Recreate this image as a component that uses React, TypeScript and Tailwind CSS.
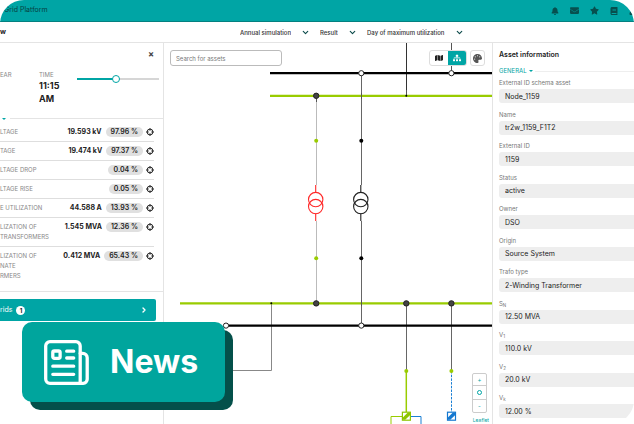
import { useState } from "react"
import type { ReactNode } from "react"
import { ChevronDown, ChevronRight } from "lucide-react"
import { FaBell, FaBook, FaEnvelope, FaMap, FaPalette, FaSitemap, FaStar, FaUser } from "react-icons/fa"

interface Reading {
  label: string[]
  value?: string
  percent: string
}

interface Field {
  id: string
  label: ReactNode
  value: string
}

const readings: Reading[] = [
  { label: ["LTAGE"], value: "19.593 kV", percent: "97.96 %" },
  { label: ["TAGE"], value: "19.474 kV", percent: "97.37 %" },
  { label: ["LTAGE DROP"], percent: "0.04 %" },
  { label: ["LTAGE RISE"], percent: "0.05 %" },
  { label: ["E UTILIZATION"], value: "44.588 A", percent: "13.93 %" },
  { label: ["LIZATION OF", "TRANSFORMERS"], value: "1.545 MVA", percent: "12.36 %" },
  { label: ["LIZATION OF", "NATE", "RMERS"], value: "0.412 MVA", percent: "65.43 %" },
]

const fields: Field[] = [
  { id: "schema", label: "External ID schema asset", value: "Node_1159" },
  { id: "name", label: "Name", value: "tr2w_1159_F1T2" },
  { id: "external", label: "External ID", value: "1159" },
  { id: "status", label: "Status", value: "active" },
  { id: "owner", label: "Owner", value: "DSO" },
  { id: "origin", label: "Origin", value: "Source System" },
  { id: "trafo", label: "Trafo type", value: "2-Winding Transformer" },
  { id: "sn", label: <>S<sub>N</sub></>, value: "12.50 MVA" },
  { id: "v1", label: <>V<sub>1</sub></>, value: "110.0 kV" },
  { id: "v2", label: <>V<sub>2</sub></>, value: "20.0 kV" },
  { id: "vk", label: <>V<sub>k</sub></>, value: "12.00 %" },
]

function Picker({ label, text }: { label: string; text: string }) {
  return (
    <div className="flex items-center gap-[10px]">
      <select aria-label={label} className="appearance-none bg-transparent text-[6px] font-medium text-[#333]">
        <option>{text}</option>
      </select>
      <ChevronDown className="size-[9px] text-[#0b4a4a]" strokeWidth={3} />
    </div>
  )
}

function Target() {
  return (
    <svg viewBox="0 0 16 16" className="size-2" fill="none" stroke="#222" aria-hidden="true">
      <circle cx="8" cy="8" r="5.8" strokeWidth="2" />
      <path d="M8 0v5.5M8 10.5v5.5M0 8h5.5M10.5 8h5.5" strokeWidth="1.8" />
    </svg>
  )
}

function Transformer({ x, color }: { x: number; color: string }) {
  return (
    <g stroke={color} strokeWidth="1.1" fill="none">
      <path d={`M${x} 142v7.5M${x} 170.5v7.5`} />
      <circle cx={x} cy="156.6" r="7.2" />
      <circle cx={x} cy="163.6" r="7.2" />
    </g>
  )
}

function Switch({ x, color }: { x: number; color: string }) {
  return (
    <g>
      <rect x={x - 4} y="369.2" width="8" height="8" fill="#fff" stroke={color} strokeWidth="1.2" />
      <path d={`M${x - 3.6} 376.8v-2.4l5-4.8h2.4v2.4l-5 4.8z`} fill={color} />
    </g>
  )
}

function GridDiagram() {
  return (
    <svg className="absolute inset-0 h-full w-full" role="img" aria-label="Grid schematic">
      {/* Wires */}
      <g fill="none" strokeWidth="1">
        <path d="M242.5 0v53" stroke="#333" />
        <path d="M287.5 0v30" stroke="#555" />
        <path d="M152.5 53v89M152.5 178v82" stroke="#bbb" />
        <path d="M197.5 30v112M197.5 178v104" stroke="#666" />
        <path d="M107.5 260v67.5H16" stroke="#888" />
        <path d="M242.5 260v68M287.5 260v68" stroke="#666" />
      </g>
      {/* Bus bars */}
      <path d="M106 30.2h2000M62 282.6h2000" stroke="#000" strokeWidth="2.2" />
      <path d="M106 52.8h2000M16 260.4h2000" stroke="#99cc00" strokeWidth="2.2" />
      <path d="M152.5 53v6M242.5 47v6" stroke="#555" />
      <path d="M197.5 50v6M197.5 257v6" stroke="#555" />
      {/* Feeders */}
      <path d="M242.3 328v41" stroke="#99cc00" strokeWidth="1.5" />
      <path d="M287.5 328v41" stroke="#1a7fd4" strokeDasharray="2.5 1.2" />
      <path d="M239 373.5H227V400" stroke="#99cc00" fill="none" />
      <path d="M246 373.5H257V400" stroke="#1a7fd4" fill="none" />
      <Switch x={242.4} color="#8ec600" />
      <Switch x={287.5} color="#1478d0" />
      <Transformer x={151.7} color="#ff2a2a" />
      <Transformer x={196.8} color="#222" />
      <g fill="#99cc00">
        <circle cx="152.2" cy="97.8" r="2" />
        <circle cx="152.2" cy="215.2" r="2" />
        <circle cx="242.3" cy="328" r="2" />
        <circle cx="287.4" cy="328" r="2" />
      </g>
      <g fill="#000">
        <circle cx="197.3" cy="97.8" r="2" />
        <circle cx="197.3" cy="215.2" r="2" />
        <circle cx="242.3" cy="52.8" r="1" />
        <circle cx="107.3" cy="260.2" r="1" />
      </g>
      <g fill="#444" stroke="#222">
        <circle cx="152.2" cy="52.8" r="2.7" />
        <circle cx="152.2" cy="260.4" r="2.7" />
        <circle cx="242.3" cy="260.4" r="2.7" />
        <circle cx="287.4" cy="260.4" r="2.7" />
      </g>
      <g fill="#fff" stroke="#222">
        <circle cx="197.3" cy="30.2" r="2.6" />
        <circle cx="287.4" cy="30.2" r="2.6" />
        <circle cx="62" cy="282.6" r="2.6" />
        <circle cx="197.3" cy="282.6" r="2.6" />
      </g>
    </svg>
  )
}

function NewsIcon() {
  return (
    <svg
      viewBox="0 0 45 45"
      className="size-[45px]"
      fill="none"
      stroke="#fff"
      strokeWidth="3.3"
      strokeLinecap="round"
      strokeLinejoin="round"
      aria-hidden="true"
    >
      <path d="M36.2 43.3H6a4.3 4.3 0 0 1-4.3-4.3V6A4.3 4.3 0 0 1 6 1.7h25.9A4.3 4.3 0 0 1 36.2 6z" />
      <path d="M36.2 13.3h2.6a4.4 4.4 0 0 1 4.4 4.4v21.6a4 4 0 0 1-4 4h-3" />
      <rect x="8.8" y="11" width="7.3" height="7.3" rx="1.5" />
      <path d="M22.7 11.2h7M22.7 18h7M8.8 26.2h20.9M8.8 34.3h20.9" />
    </svg>
  )
}

export default function App() {
  const [time, setTime] = useState(47)

  return (
    <div className="relative flex min-h-screen flex-col overflow-hidden rounded-3xl bg-white font-['Inter',sans-serif] text-[7px] text-[#222]">
      {/* Header */}
      <header className="flex h-[22px] items-center justify-between border-b border-[#048080] bg-[#00a5a5] pl-1">
        <span className="text-[#073f3f]">Grid Platform</span>
        <nav aria-label="Account" className="flex items-center gap-[11px] text-[#07504f]">
          <button aria-label="Notifications"><FaBell className="size-2" /></button>
          <button aria-label="Messages"><FaEnvelope className="size-[9px]" /></button>
          <button aria-label="Favourites"><FaStar className="size-[9px]" /></button>
          <button aria-label="Documentation"><FaBook className="size-2" /></button>
          <button aria-label="Profile" className="-mr-[3px]"><FaUser className="size-2" /></button>
        </nav>
      </header>

      {/* Toolbar */}
      <div className="flex h-[21px] items-center border-b border-[#e4e4e4]">
        <h1 className="flex-1 font-bold">w</h1>
        <div className="flex items-center gap-[10px]">
          <Picker label="Simulation" text="Annual simulation" />
          <Picker label="Mode" text="Result" />
          <Picker label="Time range" text="Day of maximum utilization" />
        </div>
        <div className="w-[170px]" />
      </div>

      <main className="flex flex-1">
        {/* Simulation results */}
        <aside className="flex w-[164px] shrink-0 flex-col border-r border-[#e4e4e4]">
          <div className="flex justify-end pt-1 pr-[5px]">
            <button aria-label="Close" className="size-[14px] text-[9px] leading-[14px] font-bold text-[#444]">×</button>
          </div>
          <div className="flex h-14 pt-[10px] pr-1">
            <div className="w-[39px] text-[6px] leading-[8px] text-[#888]">EAR</div>
            <div className="w-[38px]">
              <label htmlFor="time" className="block text-[6px] leading-[8px] text-[#888]">TIME</label>
              <div className="w-6 text-[9px] leading-[13px] font-bold">11:15 AM</div>
            </div>
            <input
              id="time"
              type="range"
              value={time}
              onChange={(e) => setTime(Number(e.target.value))}
              style={{ backgroundImage: `linear-gradient(to right, #00a5a5 ${time}%, #d6d6d6 ${time}%)` }}
              className="mt-[7px] h-[2px] min-w-0 flex-1 appearance-none [&::-webkit-slider-thumb]:size-2 [&::-webkit-slider-thumb]:appearance-none [&::-webkit-slider-thumb]:rounded-full [&::-webkit-slider-thumb]:border [&::-webkit-slider-thumb]:border-[#00a5a5] [&::-webkit-slider-thumb]:bg-white"
            />
          </div>
          <div className="flex h-[3px] items-center gap-1">
            <svg viewBox="0 0 6 3" className="ml-[2px] h-[2px] w-1" aria-hidden="true">
              <path d="M0 0h6l-3 3z" fill="#00a5a5" />
            </svg>
            <hr className="flex-1 border-[#e4e4e4]" />
          </div>
          <div className="mr-[9px] divide-y divide-[#dedede] pt-[3px]">
            {readings.map((reading, i) => (
              <div key={i} className="flex items-start py-1">
                <div className="flex-1 text-[6px] leading-[10px] whitespace-nowrap text-[#888]">
                  {reading.label.map((line) => (
                    <div key={line}>{line}</div>
                  ))}
                </div>
                <span className="leading-[10px] font-bold">{reading.value}</span>
                <span className="mr-[3px] ml-1 rounded-full bg-[#e0e0e0] px-[5px] leading-[10px] font-semibold">{reading.percent}</span>
                <button aria-label="Locate" className="flex h-[10px] items-center"><Target /></button>
              </div>
            ))}
          </div>
          <div className="mt-[6px] border-t border-[#e4e4e4] pt-[7px] pr-[7px]">
            <button className="flex h-[22px] w-full items-center gap-1 rounded-r-xs bg-[#00a5a5] pr-2 text-white">
              rids
              <span className="size-[9px] rounded-full bg-white text-[6px] leading-[9px] font-bold text-[#222]">1</span>
              <ChevronRight className="ml-auto size-2" strokeWidth={4} />
            </button>
          </div>
        </aside>

        {/* Schematic */}
        <section className="relative flex min-w-0 flex-1 flex-col justify-between">
          <GridDiagram />
          <div className="relative flex items-center justify-between pt-[7px] pr-[7px] pl-[6px]">
            <input
              aria-label="Search for assets"
              placeholder="Search for assets"
              className="h-4 w-[112px] rounded-[3px] border border-[#bbb] bg-white px-[5px] text-[6px] placeholder:text-[#777]"
            />
            <div className="flex h-4 gap-[3px]">
              <div className="flex overflow-hidden rounded-[3px] border border-[#ddd] bg-white">
                <button aria-label="Map view" className="flex w-[18px] items-center justify-center">
                  <FaMap className="size-2" />
                </button>
                <button aria-label="Schematic view" className="flex w-[18px] items-center justify-center bg-[#00a5a5] text-white">
                  <FaSitemap className="size-2" />
                </button>
              </div>
              <button aria-label="Colours" className="flex w-[15px] items-center justify-center rounded-[3px] border border-[#ddd] bg-white text-[#555]">
                <FaPalette className="size-[9px]" />
              </button>
            </div>
          </div>
          <div className="relative flex flex-col items-end gap-1 pr-[3px]">
            <div className="mr-[2px] flex w-[15px] flex-col divide-y divide-[#ccc] rounded-[2px] border border-[#ccc] bg-white text-[6px] text-[#00a5a5]">
              <button aria-label="Zoom in" className="h-3 leading-[12px]">+</button>
              <button aria-label="Reset view" className="flex h-[14px] items-center justify-center">
                <span className="size-[5px] rounded-full border border-[#00a5a5]" />
              </button>
              <button aria-label="Zoom out" className="h-3 leading-[12px]">-</button>
            </div>
            <a href="#leaflet" className="text-[5px] leading-[7px] text-[#00a5a5]">Leaflet</a>
          </div>
        </section>

        {/* Asset details */}
        <aside className="flex w-[142px] shrink-0 flex-col border-l border-[#e4e4e4] pb-[6px] pl-[6px]">
          <h2 className="pt-[7px] leading-[10px] font-semibold">Asset information</h2>
          <div className="flex items-center gap-[2px] pt-[6px] text-[6px] leading-[10px] text-[#00a5a5]">
            GENERAL
            <svg viewBox="0 0 6 3" className="h-[2px] w-1" aria-hidden="true">
              <path d="M0 0h6l-3 3z" fill="#00a5a5" />
            </svg>
            <hr className="flex-1 border-[#eee]" />
          </div>
          <div className="flex flex-1 flex-col justify-between pt-[3px]">
            {fields.map((field) => (
              <div key={field.id} className="flex flex-col gap-[2px]">
                <label htmlFor={field.id} className="h-2 text-[6px] leading-[8px] text-[#777]">{field.label}</label>
                <input
                  id={field.id}
                  readOnly
                  value={field.value}
                  className="h-[14px] w-full rounded-l-[3px] bg-[#eee] px-[6px] text-[7px]"
                />
              </div>
            ))}
          </div>
        </aside>
      </main>

      {/* News badge */}
      <div className="absolute bottom-[22px] left-[22px] flex h-20 w-[203px] items-center gap-[21px] rounded-[10px] bg-[#00a59d] pl-[22px] shadow-[8px_8px_0_#04504a]">
        <NewsIcon />
        <span className="text-[32px] font-bold text-white">News</span>
      </div>
    </div>
  )
}
